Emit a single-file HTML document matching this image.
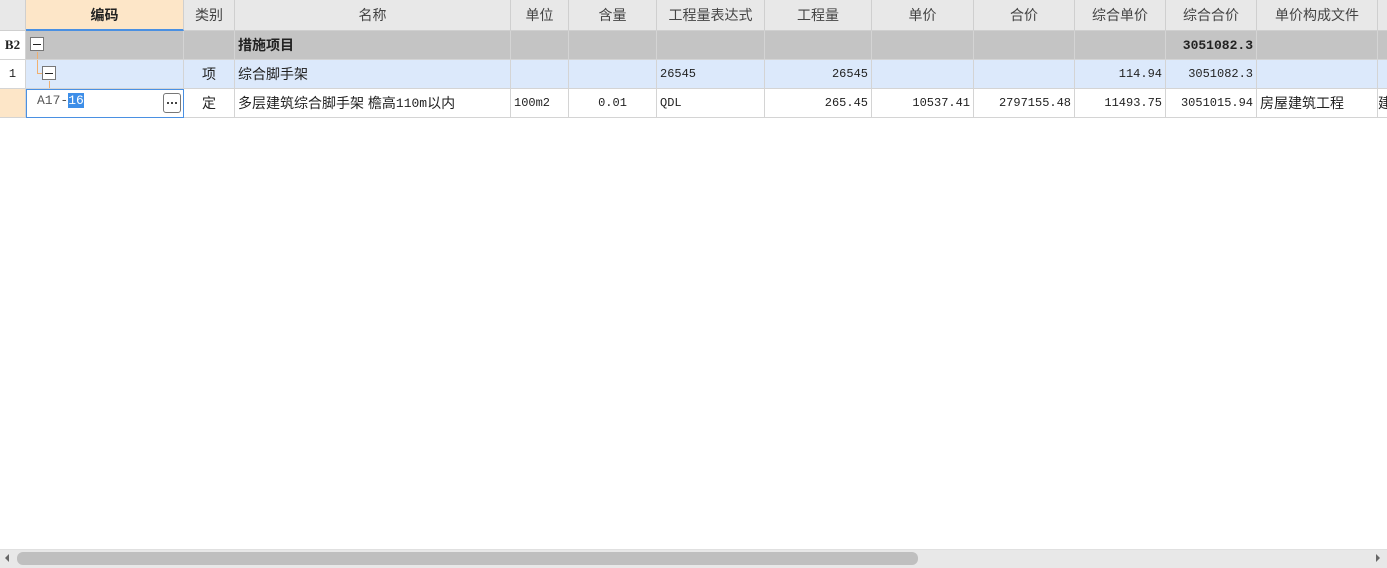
<!DOCTYPE html>
<html><head><meta charset="utf-8"><style>
*{margin:0;padding:0;box-sizing:border-box}
body{width:1387px;height:568px;background:#fff;position:relative;overflow:hidden;font-family:"Liberation Sans","Noto Sans CJK SC",sans-serif;font-size:14px;color:#222}
.row{position:absolute;left:0;height:29px;display:flex;width:1387px}
.c{height:100%;border-right:1px solid #d4d4d4;border-bottom:1px solid #d4d4d4;display:flex;align-items:center;padding:0 3px;white-space:nowrap;overflow:hidden;flex:none}
.hd .c{background:#e8e8e8;justify-content:center;color:#444;border-color:#cfcfcf}
.ctr{justify-content:center}.r{justify-content:flex-end}
.m{font-family:"Liberation Mono","Noto Sans CJK SC",monospace;font-size:12px}
.b{font-weight:bold}
.box{width:14px;height:14px;border:1px solid #777;background:#fff;position:absolute;display:flex;align-items:center;justify-content:center}
.box:after{content:"";width:8px;height:1px;background:#222}
.dot{width:2px;height:2px;background:#444;margin:0 1px}
</style></head><body>
<div class="row hd" style="top:0;height:31px">
<div class="c" style="width:26px"></div>
<div class="c b" style="width:158px;background:#fde6c8;border-bottom:2px solid #4a90e2;color:#222">编码</div>
<div class="c" style="width:51px">类别</div>
<div class="c" style="width:276px">名称</div>
<div class="c" style="width:58px">单位</div>
<div class="c" style="width:88px">含量</div>
<div class="c" style="width:108px">工程量表达式</div>
<div class="c" style="width:107px">工程量</div>
<div class="c" style="width:102px">单价</div>
<div class="c" style="width:101px">合价</div>
<div class="c" style="width:91px">综合单价</div>
<div class="c" style="width:91px">综合合价</div>
<div class="c" style="width:121px">单价构成文件</div>
<div class="c" style="width:9px;border-right:none"></div>
</div>
<div class="row" style="top:31px;height:29px;background:#c4c4c4">
<div class="c ctr m b" style="width:26px;background:#fff;font-family:'Liberation Serif',serif;font-size:13px">B2</div>
<div class="c" style="width:158px;position:relative"><div class="box" style="left:4px;top:6px"></div>
<div style="position:absolute;left:11px;top:21px;width:1px;height:8px;background:#f0b070"></div></div>
<div class="c" style="width:51px"></div>
<div class="c b" style="width:276px">措施项目</div>
<div class="c" style="width:58px"></div>
<div class="c" style="width:88px"></div>
<div class="c" style="width:108px"></div>
<div class="c" style="width:107px"></div>
<div class="c" style="width:102px"></div>
<div class="c" style="width:101px"></div>
<div class="c" style="width:91px"></div>
<div class="c r m b" style="width:91px;font-size:13px">3051082.3</div>
<div class="c" style="width:121px"></div>
<div class="c" style="width:9px;border-right:none"></div>
</div>
<div class="row" style="top:60px;height:29px;background:#dce9fb">
<div class="c ctr m" style="width:26px;background:#fff">1</div>
<div class="c" style="width:158px;position:relative">
<div style="position:absolute;left:11px;top:0;width:1px;height:14px;background:#f0b070"></div>
<div style="position:absolute;left:11px;top:13px;width:6px;height:1px;background:#f0b070"></div>
<div style="position:absolute;left:23px;top:21px;width:1px;height:8px;background:#f0b070"></div>
<div class="box" style="left:16px;top:6px"></div></div>
<div class="c ctr" style="width:51px">项</div>
<div class="c" style="width:276px">综合脚手架</div>
<div class="c" style="width:58px"></div>
<div class="c" style="width:88px"></div>
<div class="c m" style="width:108px">26545</div>
<div class="c r m" style="width:107px">26545</div>
<div class="c" style="width:102px"></div>
<div class="c" style="width:101px"></div>
<div class="c r m" style="width:91px">114.94</div>
<div class="c r m" style="width:91px">3051082.3</div>
<div class="c" style="width:121px"></div>
<div class="c" style="width:9px;border-right:none"></div>
</div>
<div class="row" style="top:89px;height:29px;background:#fff">
<div class="c" style="width:26px;background:#fde6c8"></div>
<div class="c m" style="width:158px;position:relative;border:1px solid #4a90e2;padding-left:10px;align-items:flex-start;padding-top:3px;color:#555;font-size:13px">A17-<span style="background:#3d8ee8;color:#fff">16</span>
<div style="position:absolute;left:136px;top:3px;width:18px;height:20px;border:1px solid #777;border-radius:3px;display:flex;align-items:center;justify-content:center"><i class="dot"></i><i class="dot"></i><i class="dot"></i></div></div>
<div class="c ctr" style="width:51px">定</div>
<div class="c" style="width:276px">多层建筑综合脚手架 檐高<span class="m" style="font-size:13px">110m</span>以内</div>
<div class="c m" style="width:58px">100m2</div>
<div class="c ctr m" style="width:88px">0.01</div>
<div class="c m" style="width:108px">QDL</div>
<div class="c r m" style="width:107px">265.45</div>
<div class="c r m" style="width:102px">10537.41</div>
<div class="c r m" style="width:101px">2797155.48</div>
<div class="c r m" style="width:91px">11493.75</div>
<div class="c r m" style="width:91px">3051015.94</div>
<div class="c" style="width:121px">房屋建筑工程</div>
<div class="c" style="width:9px;border-right:none;padding:0">建</div>
</div>
<div style="position:absolute;left:0;top:549px;width:1387px;height:19px;background:#e8e8e8;border-top:1px solid #e0e0e0"></div>
<div style="position:absolute;left:17px;top:552px;width:901px;height:13px;background:#bfbfbf;border-radius:6px"></div>
<div style="position:absolute;left:5px;top:554px;width:0;height:0;border-top:4px solid transparent;border-bottom:4px solid transparent;border-right:4px solid #666"></div>
<div style="position:absolute;left:1376px;top:554px;width:0;height:0;border-top:4px solid transparent;border-bottom:4px solid transparent;border-left:4px solid #666"></div>
</body></html>
